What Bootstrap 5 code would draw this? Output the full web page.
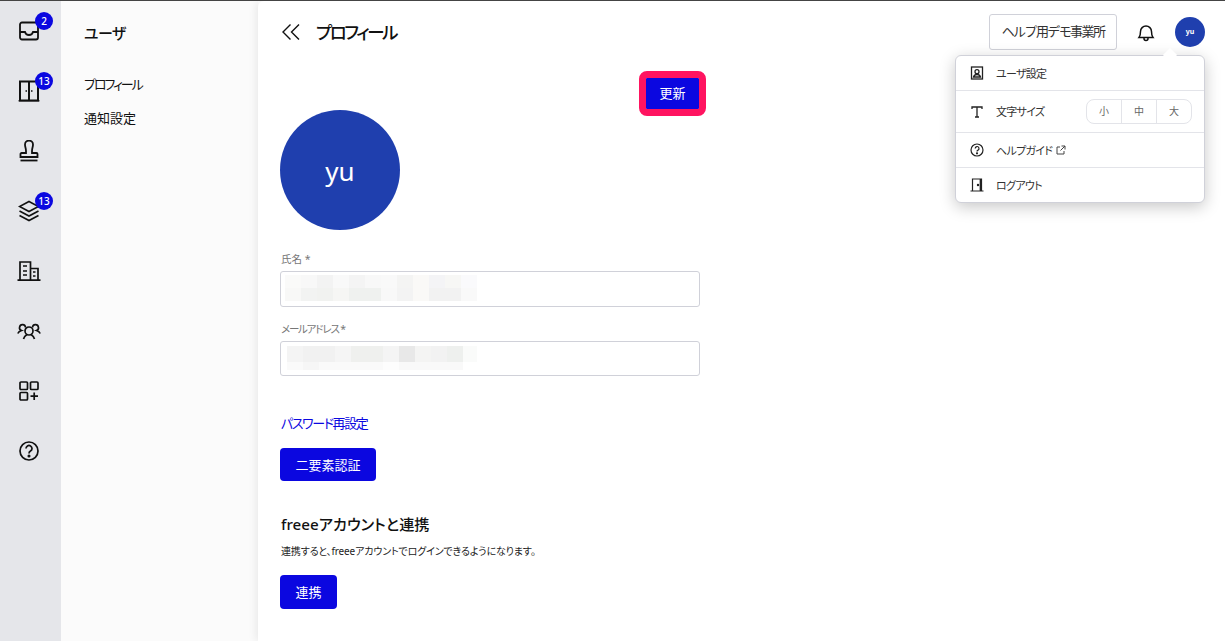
<!DOCTYPE html>
<html lang="ja">
<head>
  <meta charset="UTF-8" />
  <meta name="viewport" content="width=device-width, initial-scale=1.0" />
  <title>プロフィール</title>
  <link href="https://cdn.jsdelivr.net/npm/bootstrap@5.3.0/dist/css/bootstrap.min.css" rel="stylesheet">
  <style>
    html, body { height: 100%; overflow: hidden; }
    body { font-family: "Noto Sans", "Noto Sans CJK JP", sans-serif; font-feature-settings: "palt"; color: #111; border-top: 1px solid #444; background: #fff; }
    svg { display: block; }
    .app-shell { height: 640px; }
    .rail { width: 61px; background: #e5e6ea; flex: none; }
    .rail-item { height: 60px; width: 58px; position: relative; }
    .rail-badge { position: absolute; left: 35px; top: 11px; width: 18px; height: 18px; border-radius: 50%; background: #0b07e0; color: #fff; font-size: 10px; font-weight: 500; line-height: 18px; text-align: center; }
    .subnav { width: 197px; background: #fbfbfb; flex: none; padding: 22px 0 0 23px; }
    .subnav-title { font-size: 15px; font-weight: 500; line-height: 20px; margin-bottom: 32px; letter-spacing: -.6px; }
    .subnav-link { display: block; font-size: 13px; line-height: 18px; color: #111; text-decoration: none; margin-bottom: 16px; }
    .subnav-link.kana-tight { letter-spacing: -2.1px; }
    .main-pane { flex: 1; position: relative; box-shadow: -2px 0 8px rgba(0,0,0,.08); border-top-left-radius: 6px; padding: 0 22px; }
    .top-bar { height: 64px; padding-bottom: 2px; }
    .page-title { font-size: 17.5px; font-weight: 500; margin: 0 0 0 16px; line-height: 24px; letter-spacing: -2.4px; }
    .office-btn { height: 36px; width: 128px; padding: 0; font-size: 13px; letter-spacing: -1.6px; color: #333; border: 1px solid #d0d1d9; border-radius: 3px; background: #fff; margin-right: 20px; }
    .head-avatar { width: 30px; height: 30px; border-radius: 50%; background: #1f3fae; color: #fff; font-size: 7px; font-weight: 700; line-height: 30px; text-align: center; margin-left: 20px; margin-right: -2px; }
    .form-col { width: 420px; }
    .save-wrap { margin-right: -6px; height: 45px; margin-top: 6px; }
    .save-ring { border: 7px solid #ff1460; border-radius: 8px; display: block; }
    .primary-btn { background: #0b07e0; border: 0; color: #fff; border-radius: 4px; font-size: 13px; line-height: 18px; padding: 0; }
    .save-ring .primary-btn { width: 53px; height: 31px; border-radius: 1px; display: block; padding-bottom: 2px; }
    .big-avatar { width: 120px; height: 120px; border-radius: 50%; background: #1f3fae; color: #fff; font-size: 26px; line-height: 122px; text-align: center; margin-top: -6px; margin-bottom: 22px; }
    .field-label { font-size: 10.5px; color: #777; line-height: 14px; margin-bottom: 5px; padding-left: 1px; }
    .field-label.kana-tight { letter-spacing: -1.2px; }
    .field-box { height: 36px; border: 1px solid #d0d1d9; border-radius: 3px; background: #fff; padding: 0; overflow: hidden; margin-bottom: 15px; }
    .field-box.mail-box { height: 35px; }
    .reset-link { color: #0b07e0; font-size: 13px; line-height: 18px; letter-spacing: -1.4px; text-decoration: none; display: block; margin-top: 38px; padding-left: 1px; }
    .two-factor { width: 96px; height: 33px; display: block; margin-top: 16px; }
    .link-title { font-size: 15.2px; font-weight: 500; line-height: 22px; margin: 32px 0 0; padding-left: 1px; }
    .link-note { font-size: 10px; line-height: 14px; color: #222; margin: 9px 0 0; padding-left: 1px; letter-spacing: -.15px; }
    .link-btn { width: 57px; height: 34px; display: block; margin-top: 17px; }
    .user-menu { position: absolute; left: 697px; top: 54px; width: 250px; height: 148px; background: #fff; border: 1px solid #d0d1d9; border-radius: 6px; box-shadow: 0 4px 16px rgba(0,0,0,.22); z-index: 5; }
    .user-menu::before { content: ""; position: absolute; right: 29px; top: -6px; width: 10px; height: 10px; background: #fff; transform: rotate(45deg); }
    .menu-row { height: 35px; padding-left: 14px; font-size: 11px; color: #333; position: relative; }
    .menu-row:first-child { height: 34px; }
    .menu-row + .menu-row { border-top: 1px solid #e3e4e9; }
    .menu-row.size-row { height: 42px; }
    .menu-icon { width: 14px; margin-right: 12px; flex: none; }
    .menu-text { padding-top: 2px; letter-spacing: -.7px; }
    .size-group { margin-left: auto; margin-right: 12px; width: 106px; height: 25px; border: 1px solid #e3e4e9; border-radius: 8px; }
    .size-group span { flex: 1; font-size: 10px; color: #666; text-align: center; line-height: 23px; }
    .size-group span + span { border-left: 1px solid #e3e4e9; }
  </style>
</head>
<body>
  <div class="d-flex app-shell">
    <nav class="rail">
      <div class="rail-item d-flex align-items-center justify-content-center">
        <svg width="20" height="20" viewBox="0 0 20 20" fill="none" stroke="#111" stroke-width="1.800"><rect x="1" y="1.500" width="18" height="17" rx="2"/><path d="M1 11h5c.5 2 2 3 4 3s3.500-1 4-3h5"/></svg>
        <span class="rail-badge">2</span>
      </div>
      <div class="rail-item d-flex align-items-center justify-content-center">
        <svg width="22" height="22" viewBox="0 0 22 22" fill="none" stroke="#111" stroke-width="2"><path d="M2 1.500h18v19H2zM11 1.500v19"/><path d="M.5 20.800h21" stroke-width="1.200"/><path d="M7.500 11h1.500M13 11h1.500" stroke-width="1.300"/></svg>
        <span class="rail-badge">13</span>
      </div>
      <div class="rail-item d-flex align-items-center justify-content-center">
        <svg width="20" height="22" viewBox="0 0 20 22" fill="none" stroke="#111" stroke-width="1.800"><path d="M7 11c0-3-1-4-1-6.500a4 4 0 0 1 8 0C14 7 13 8 13 11v2h4.500a1 1 0 0 1 1 1v3h-17v-3a1 1 0 0 1 1-1H7z"/><path d="M1.500 20.500h17"/></svg>
      </div>
      <div class="rail-item d-flex align-items-center justify-content-center">
        <svg width="22" height="22" viewBox="0 0 22 22" fill="none" stroke="#111" stroke-width="1.600"><path d="M11 1.500l9.500 5-9.500 5-9.500-5zM1.500 11l9.500 5 9.500-5M1.500 15.500l9.500 5 9.500-5"/></svg>
        <span class="rail-badge">13</span>
      </div>
      <div class="rail-item d-flex align-items-center justify-content-center">
        <svg width="24" height="20" viewBox="0 0 24 20" fill="none" stroke="#111" stroke-width="1.700"><path d="M3 19V1h10.500v18M13.500 7.500H21V19M.5 19.200h23"/><path d="M6 5h4M6 10h4M6 14h4M16 11h2.500M16 15h2.500" stroke-width="1.400"/></svg>
      </div>
      <div class="rail-item d-flex align-items-center justify-content-center">
        <svg width="24" height="18" viewBox="0 0 24 18" fill="none" stroke="#111" stroke-width="1.700"><circle cx="12" cy="9" r="4"/><path d="M6.500 17c.5-2 2-3.500 3.500-4.500M17.500 17c-.5-2-2-3.500-3.500-4.500"/><path d="M8.500 5.500a3 3 0 1 0-4 3C3 9 1.500 10 .8 11.500M15.500 5.500a3 3 0 1 1 4 3c1.500.5 3 1.500 3.700 3"/></svg>
      </div>
      <div class="rail-item d-flex align-items-center justify-content-center">
        <svg width="20" height="20" viewBox="0 0 20 20" fill="none" stroke="#111" stroke-width="1.700"><rect x="1" y="1" width="7.500" height="7.500" rx="1"/><rect x="11.500" y="1" width="7.500" height="7.500" rx="1"/><rect x="1" y="11.500" width="7.500" height="7.500" rx="1"/><path d="M15.200 11.500v7.500M11.500 15.200h7.500"/></svg>
      </div>
      <div class="rail-item d-flex align-items-center justify-content-center">
        <svg width="20" height="20" viewBox="0 0 20 20" fill="none" stroke="#111" stroke-width="1.700"><circle cx="10" cy="10" r="9"/><path d="M7 7.500a3 3 0 1 1 4.500 2.600c-1 .6-1.500 1.100-1.500 2.400"/><circle cx="10" cy="15" r=".7" fill="#111"/></svg>
      </div>
    </nav>

    <aside class="subnav">
      <div class="subnav-title">ユーザ</div>
      <a class="subnav-link kana-tight" href="#">プロフィール</a>
      <a class="subnav-link" href="#">通知設定</a>
    </aside>

    <main class="main-pane">
      <div class="top-bar d-flex align-items-center">
        <svg width="20" height="16" viewBox="0 0 20 16" fill="none" stroke="#111" stroke-width="1.400"><path d="M10.500 .5L3 8l7.500 7.500M19 .5L11.500 8l7.500 7.500"/></svg>
        <h1 class="page-title">プロフィール</h1>
        <button type="button" class="office-btn ms-auto">ヘルプ用デモ事業所</button>
        <svg width="18" height="19" viewBox="0 0 18 19" fill="none" stroke="#111" stroke-width="1.500"><path d="M2 14.500c1.200-1.500 1.500-2.500 1.500-6a5.500 5.500 0 0 1 11 0c0 3.500.3 4.500 1.500 6zM7 14.500v1a2 2 0 0 0 4 0v-1"/></svg>
        <div class="head-avatar">yu</div>
      </div>

      <div class="form-col">
        <div class="save-wrap d-flex justify-content-end">
          <span class="save-ring"><button type="button" class="primary-btn">更新</button></span>
        </div>
        <div class="big-avatar">yu</div>

        <div class="field-label">氏名 *</div>
        <div class="field-box">
          <svg width="418" height="34" viewBox="0 0 418 34"><g shape-rendering="crispEdges"><path fill="#fafaf9" d="M4 3h16v13H4z"/><path fill="#f8f8f8" d="M20 3h16v13H20z"/><path fill="#f3f3f3" d="M36 3h16v13H36z"/><path fill="#f9f9f9" d="M52 3h16v13H52z"/><path fill="#f4f4f4" d="M68 3h16v13H68z"/><path fill="#f8f8f8" d="M84 3h16v13H84z"/><path fill="#f9f9f9" d="M100 3h16v13h-16z"/><path fill="#f4f4f3" d="M116 3h16v13h-16z"/><path fill="#faf9f7" d="M132 3h16v13h-16z"/><path fill="#f4f4f6" d="M148 3h16v13h-16z"/><path fill="#f7f7f5" d="M164 3h16v13h-16z"/><path fill="#fafafc" d="M180 3h16v13h-16z"/><path fill="#f8f8f7" d="M4 16h16v13H4z"/><path fill="#f2f3f2" d="M20 16h16v13H20z"/><path fill="#f1f2f0" d="M36 16h16v13H36z"/><path fill="#f6f6f4" d="M52 16h16v13H52z"/><path fill="#eff1ef" d="M68 16h32v13H68z"/><path fill="#f8f8f8" d="M100 16h16v13h-16z"/><path fill="#f3f3f3" d="M116 16h16v13h-16z"/><path fill="#faf9f7" d="M132 16h16v13h-16z"/><path fill="#f2f2f2" d="M148 16h32v13h-32z"/><path fill="#f9f9f9" d="M180 16h16v13h-16z"/></g></svg>
        </div>

        <div class="field-label kana-tight">メールアドレス *</div>
        <div class="field-box mail-box">
          <svg width="418" height="33" viewBox="0 0 418 33"><g shape-rendering="crispEdges"><path fill="#f4f4f4" d="M6 4h16v16H6z"/><path fill="#f1f1f1" d="M22 4h32v16H22z"/><path fill="#f5f5f5" d="M54 4h16v16H54z"/><path fill="#eff0ee" d="M70 4h32v16H70z"/><path fill="#f4f4f4" d="M102 4h16v16h-16z"/><path fill="#e8e8e8" d="M118 4h16v16h-16z"/><path fill="#f4f4f3" d="M134 4h16v16h-16z"/><path fill="#f2f2f2" d="M150 4h16v16h-16z"/><path fill="#eef0ee" d="M166 4h16v16h-16z"/><path fill="#fafbfa" d="M182 4h14v16h-14z"/><path fill="#fafafa" d="M6 20h16v8H6z"/><path fill="#f6f6f6" d="M22 20h16v8H22z"/><path fill="#fafafa" d="M38 20h64v8H38z"/><path fill="#fdfdfd" d="M102 20h16v8h-16z"/><path fill="#f9f9f9" d="M118 20h64v8h-64z"/></g></svg>
        </div>

        <a class="reset-link" href="#">パスワード再設定</a>
        <button type="button" class="primary-btn two-factor">二要素認証</button>

        <h2 class="link-title">freeeアカウントと連携</h2>
        <p class="link-note">連携すると、freeeアカウントでログインできるようになります。</p>
        <button type="button" class="primary-btn link-btn">連携</button>
      </div>

      <div class="user-menu">
        <div class="menu-row d-flex align-items-center">
          <svg class="menu-icon" width="14" height="14" viewBox="0 0 14 14" fill="none" stroke="#222" stroke-width="1.300"><rect x="1.500" y="1" width="11" height="12"/><circle cx="7" cy="5.700" r="2"/><path d="M3.500 11c.5-1.800 2-2.500 3.500-2.500s3 .7 3.500 2.500z"/></svg>
          <span class="menu-text">ユーザ設定</span>
        </div>
        <div class="menu-row size-row d-flex align-items-center">
          <svg class="menu-icon" width="14" height="14" viewBox="0 0 14 14" fill="none" stroke="#222" stroke-width="1.300"><path d="M2 4V2h10v2M7 2v10M5 12h4"/></svg>
          <span class="menu-text">文字サイズ</span>
          <div class="size-group d-flex"><span>小</span><span>中</span><span>大</span></div>
        </div>
        <div class="menu-row d-flex align-items-center">
          <svg class="menu-icon" width="14" height="14" viewBox="0 0 14 14" fill="none" stroke="#222" stroke-width="1.200"><circle cx="7" cy="7" r="6"/><path d="M5.200 5.400a1.900 1.900 0 1 1 2.800 1.700c-.6.300-1 .7-1 1.400"/><circle cx="7" cy="10.300" r=".5" fill="#222"/></svg>
          <span class="menu-text">ヘルプガイド</span>
          <svg class="ms-1" width="10" height="10" viewBox="0 0 10 10" fill="none" stroke="#444" stroke-width="1"><path d="M4 2H1v7h7V6M5.500 1H9v3.500M9 1L4.500 5.500"/></svg>
        </div>
        <div class="menu-row d-flex align-items-center">
          <svg class="menu-icon" width="14" height="14" viewBox="0 0 14 14" fill="none" stroke="#222" stroke-width="1.200"><path d="M2.500 13V1h9v12M.5 13h13"/><path d="M10.500 1v12" stroke-width="1.700"/><circle cx="8" cy="7" r=".6" fill="#222"/></svg>
          <span class="menu-text">ログアウト</span>
        </div>
      </div>
    </main>
  </div>
  <script src="https://cdn.jsdelivr.net/npm/bootstrap@5.3.0/dist/js/bootstrap.bundle.min.js"></script>
</body>
</html>
